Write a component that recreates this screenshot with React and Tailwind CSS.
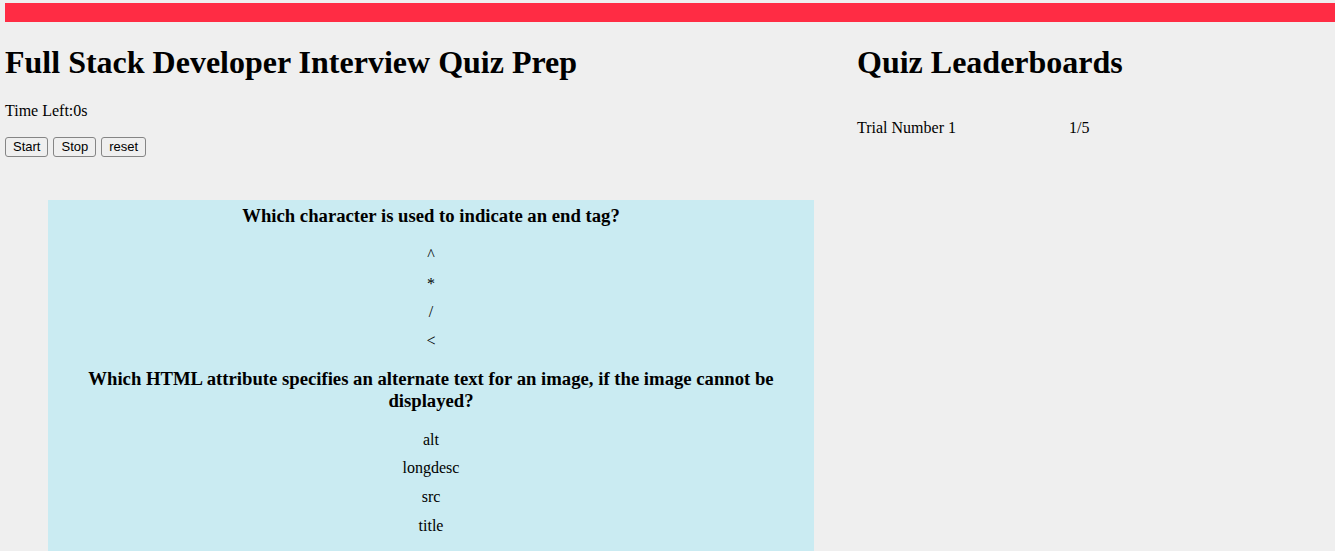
import React from 'react';

const questions = [
  {
    q: 'Which character is used to indicate an end tag?',
    options: ['^', '*', '/', '<'],
  },
  {
    q: 'Which HTML attribute specifies an alternate text for an image, if the image cannot be displayed?',
    options: ['alt', 'longdesc', 'src', 'title'],
  },
];

const Btn = ({ children }) => (
  <button className="h-[20px] px-[7px] mr-[5px] border border-[#858585] rounded-[3px] bg-[#efefef] text-[13px] leading-[18px] text-black font-['Liberation_Sans',Arial,sans-serif]">
    {children}
  </button>
);

const App = () => {
  return (
    <div className="min-h-[551px] bg-[#efefef] text-black font-['Liberation_Serif','Times_New_Roman',serif] overflow-hidden">
      <div className="ml-[5px] pt-[3px]">
        <div className="h-[19px] bg-[#ff2c44]" />
      </div>

      <div className="flex">
        {/* quiz side */}
        <div className="w-[852px] mr-[5px] pl-[5px]">
          <h1 className="mt-[22px] text-[32px] leading-[37px] font-bold">
            Full Stack Developer Interview Quiz Prep
          </h1>
          <p className="mt-[21px] text-[16px] leading-[18px]">Time Left:0s</p>
          <div className="mt-[17px] flex">
            <Btn>Start</Btn>
            <Btn>Stop</Btn>
            <Btn>reset</Btn>
          </div>

          <div className="mt-[43px] ml-[43px] w-[766px] bg-[#caebf2] pt-[5px] pb-[40px] text-center">
            {questions.map((item, i) => (
              <div key={i} className={i > 0 ? 'mt-[12px]' : ''}>
                <h3 className="text-[18.7px] leading-[22px] font-bold px-[20px]">{item.q}</h3>
                <div className="mt-[14px]">
                  {item.options.map((opt) => (
                    <div key={opt} className="h-[28.7px] leading-[28px] text-[16px]">
                      {opt}
                    </div>
                  ))}
                </div>
              </div>
            ))}
          </div>
        </div>

        {/* leaderboard side */}
        <div className="flex-1">
          <h1 className="mt-[22px] text-[32px] leading-[37px] font-bold">Quiz Leaderboards</h1>
          <table className="mt-[38px] text-[16px] leading-[18px]">
            <tbody>
              <tr>
                <td className="w-[212px] p-0">Trial Number 1</td>
                <td className="p-0">1/5</td>
              </tr>
            </tbody>
          </table>
        </div>
      </div>
    </div>
  );
};

export default App;
